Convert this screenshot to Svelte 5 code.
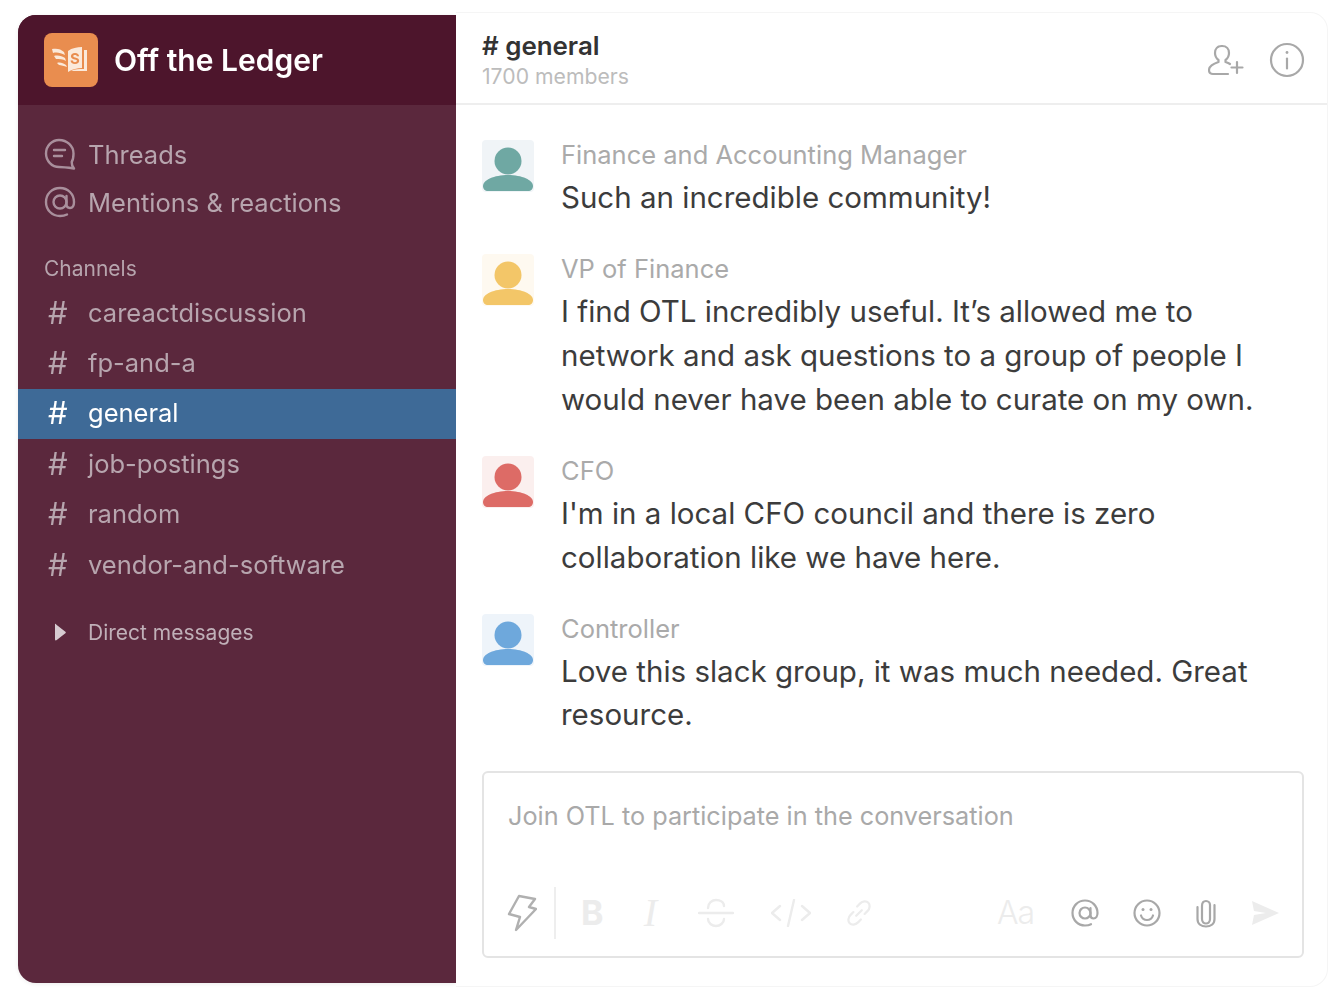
<script>
    const nav = [
        { id: 'threads', label: 'Threads' },
        { id: 'mentions', label: 'Mentions & reactions' }
    ];

    const channels = ['careactdiscussion', 'fp-and-a', 'general', 'job-postings', 'random', 'vendor-and-software'];

    const messages = [
        { role: 'Finance and Accounting Manager', color: '#6fa8a3', bg: '#f0f4f7', lines: ['Such an incredible community!'] },
        { role: 'VP of Finance', color: '#f3c668', bg: '#fef9f0', lines: ['I find OTL incredibly useful. It’s allowed me to', 'network and ask questions to a group of people I', 'would never have been able to curate on my own.'] },
        { role: 'CFO', color: '#dd6b66', bg: '#fbefee', lines: ["I'm in a local CFO council and there is zero", 'collaboration like we have here.'] },
        { role: 'Controller', color: '#6ea8dc', bg: '#eef4fa', lines: ['Love this slack group, it was much needed. Great', 'resource.'] }
    ];
</script>

<div class="window">
    <aside class="sidebar">
        <header class="team">
            <div class="logo">
                <svg viewBox="0 0 40 32" width="40" height="32" fill="#fbe9da">
                    <path d="M1 5c5-1 9 0 12 3l1 3C10 9 6 8 2 9zM3 12c4-1 8 0 11 2l1 3c-3-2-7-2-10-2zM6 19c3-1 6 0 9 2l1 2c-3-1-6-2-8-2z" />
                    <path d="M17 7c4-3 9-4 14-4v21c-5 0-9 1-14 4z" />
                    <path d="M33 6h3v21H20c4-2 8-2 13-2z" />
                    <text x="24" y="20" class="dollar">S</text>
                </svg>
            </div>
            <span class="team-name">Off the Ledger</span>
        </header>

        <nav class="nav">
            {#each nav as item (item.id)}
                <div class="nav-row">
                    {#if item.id === 'threads'}
                        <svg viewBox="0 0 32 32" width="32" height="32" fill="none" stroke="#a98f9c" stroke-width="2.4" stroke-linecap="round" stroke-linejoin="round">
                            <path d="M15 2C8 2 2 8 2 15.500S8 29 15 29c4 0 8 .5 15 1.500-1.500-2-2.500-4-2.300-6.500C29 22 29.500 19 29.500 15.500 29.500 8 23 2 15 2z" />
                            <path d="M10 12h11M10 18h8" />
                        </svg>
                    {:else}
                        <svg viewBox="0 0 32 32" width="32" height="32" fill="none" stroke="#a98f9c" stroke-width="2.4" stroke-linecap="round">
                            <circle cx="16" cy="16" r="6.500" />
                            <path d="M22.500 10v8c0 3 1.500 4 3.500 4 3 0 4-3 4-6C30 8 24 2 16 2S2 8 2 16s6 14 14 14c3 0 5-.5 7-1.500" />
                        </svg>
                    {/if}
                    <span>{item.label}</span>
                </div>
            {/each}
        </nav>

        <div class="section-label">Channels</div>

        <ul class="channels">
            {#each channels as channel (channel)}
                <li class="channel" class:active={channel === 'general'}>
                    <span class="hash">#</span>
                    <span>{channel}</span>
                </li>
            {/each}
        </ul>

        <div class="dm-row">
            <svg viewBox="0 0 12 18" width="12" height="18" fill="#d6cbd1">
                <path d="M1 1.500v15c0 .8.800 1.200 1.400.800l9-7c.5-.4.500-1.200 0-1.600l-9-7C1.800.300 1 .700 1 1.500z" />
            </svg>
            <span>Direct messages</span>
        </div>
    </aside>

    <main class="main">
        <header class="channel-head">
            <div>
                <div class="channel-title"># general</div>
                <div class="members">1700 members</div>
            </div>
            <div class="head-icons">
                <svg viewBox="0 0 36 32" width="36" height="32" fill="none" stroke="#a8a8a8" stroke-width="2.200" stroke-linecap="round" stroke-linejoin="round">
                    <path d="M14 2c-4.500 0-7 3-7 7 0 3 1.500 5.500 3.500 7v2C6 19.500 1 21.500 1 26c0 3 2 4 4 4h15" />
                    <path d="M14 2c4.500 0 7 3 7 7 0 3-1.500 5.500-3.500 7v2c1.500.5 3 1 4.500 2" />
                    <path d="M29 18v11M23.500 23.500h11" />
                </svg>
                <svg viewBox="0 0 36 36" width="36" height="36" fill="none" stroke="#a8a8a8" stroke-width="2.200" stroke-linecap="round">
                    <circle cx="18" cy="18" r="16" />
                    <path d="M18 16.500v10" />
                    <circle cx="18" cy="10.500" r="1.400" fill="#a8a8a8" stroke="none" />
                </svg>
            </div>
        </header>

        <section class="messages">
            {#each messages as message (message.role)}
                <article class="message">
                    <div class="avatar" style="background: {message.bg}">
                        <svg viewBox="0 0 52 52" width="52" height="52" fill={message.color}>
                            <circle cx="26" cy="21" r="13.500" />
                            <path d="M1 46c0-6 11-11 25-11s25 5 25 11c0 3-2 5-5 5H6c-3 0-5-2-5-5z" />
                        </svg>
                    </div>
                    <div class="message-body">
                        <div class="role">{message.role}</div>
                        {#each message.lines as line}
                            <div class="line">{line}</div>
                        {/each}
                    </div>
                </article>
            {/each}
        </section>

        <div class="composer">
            <div class="placeholder">Join OTL to participate in the conversation</div>
            <div class="toolbar">
                <svg class="bolt" viewBox="0 0 30 38" width="30" height="38" fill="none" stroke="#b0b0b0" stroke-width="2.400" stroke-linejoin="round">
                    <path d="M12 2l16 3-6 8 7 2L9 36l4-13-11-3z" />
                </svg>
                <span class="divider"></span>
                <div class="format">
                    <span class="fmt-b">B</span>
                    <span class="fmt-i">I</span>
                    <svg viewBox="0 0 36 30" width="36" height="30" fill="none" stroke="#ececec" stroke-width="2.400" stroke-linecap="round">
                        <path d="M1 15h34M10 10c0-5 4-8 8-8s8 2 8 6M10 21c0 4 4 7 8 7s8-3 8-7" />
                    </svg>
                    <svg viewBox="0 0 40 28" width="40" height="28" fill="none" stroke="#ececec" stroke-width="2.400" stroke-linecap="round" stroke-linejoin="round">
                        <path d="M9 7l-8 7 8 7M31 7l8 7-8 7M23 1l-6 26" />
                    </svg>
                    <svg class="link" viewBox="0 0 30 30" width="28" height="28" fill="none" stroke="#ececec" stroke-width="2.400" stroke-linecap="round">
                        <path d="M12 18l6-6M13 8l3-3c3-3 7-3 9-1s2 6-1 9l-3 3M17 22l-3 3c-3 3-7 3-9 1s-2-6 1-9l3-3" />
                    </svg>
                </div>
                <div class="actions">
                    <span class="fmt-aa">Aa</span>
                    <svg viewBox="0 0 28 28" width="28" height="28" fill="none" stroke="#a8a8a8" stroke-width="2.200" stroke-linecap="round">
                        <circle cx="14" cy="14" r="5.500" />
                        <path d="M19.500 9v7c0 2.500 1.500 3.500 3.200 3.500 2.300 0 3.800-2.500 3.800-5.500C26.500 7 21 1.500 14 1.500S1.500 7 1.500 14 7 26.500 14 26.500c2.500 0 4.500-.5 6-1.300" />
                    </svg>
                    <svg viewBox="0 0 28 28" width="28" height="28" fill="none" stroke="#a8a8a8" stroke-width="2.200" stroke-linecap="round">
                        <circle cx="14" cy="14" r="12.500" />
                        <path d="M8 16.500c1 3 3.500 4.500 6 4.500s5-1.500 6-4.500" />
                        <circle cx="10" cy="10.500" r="1.500" fill="#a8a8a8" stroke="none" />
                        <circle cx="18" cy="10.500" r="1.500" fill="#a8a8a8" stroke="none" />
                    </svg>
                    <svg viewBox="0 0 22 30" width="22" height="30" fill="none" stroke="#a8a8a8" stroke-width="2.200" stroke-linecap="round">
                        <path d="M7 8v13c0 3 2 4.500 4 4.500s4-1.500 4-4.500V7c0-2-1.500-4-4-4S7 5 7 8" />
                        <path d="M2.500 9v12c0 5 4 7.500 8.500 7.500s8.500-2.500 8.500-7.500V7" />
                    </svg>
                    <svg viewBox="0 0 28 26" width="28" height="26" fill="#ececec">
                        <path d="M1 1l27 12L1 25l2-10 12-2-12-2z" />
                    </svg>
                </div>
            </div>
        </div>
    </main>
</div>

<style>
    :global(body) {
        margin: 0;
        background: #fff;
    }

    .window {
        width: 1328px;
        height: 995px;
        box-sizing: border-box;
        padding: 15px 0 12px 18px;
        display: flex;
        overflow: hidden;
        font-family: Inter, "Noto Sans", sans-serif;
        filter: blur(0.7px);
    }

    .sidebar {
        width: 438px;
        flex: none;
        background: #5b283d;
        border-radius: 18px 0 0 18px;
        overflow: hidden;
        box-shadow: 0 1px 4px rgba(0, 0, 0, 0.08);
    }

    .team {
        height: 90px;
        background: #4d152c;
        display: flex;
        align-items: center;
        padding-left: 26px;
        gap: 16px;
    }

    .logo {
        width: 54px;
        height: 54px;
        background: #e98d4f;
        border-radius: 8px;
        display: flex;
        align-items: center;
        justify-content: center;
    }

    .dollar {
        font-size: 15px;
        font-weight: 700;
        fill: #e98d4f;
        text-anchor: middle;
    }

    .team-name {
        color: #fff;
        font-size: 30px;
        font-weight: 600;
        margin-top: -1px;
    }

    .nav {
        padding: 25px 0 0 26px;
    }

    .nav-row {
        height: 48px;
        display: flex;
        align-items: center;
        gap: 12px;
        color: #b7a5ae;
        font-size: 25.5px;
    }

    .section-label {
        margin-top: 27px;
        padding-left: 26px;
        height: 32px;
        line-height: 32px;
        color: #b7a5ae;
        font-size: 21px;
    }

    .channels {
        list-style: none;
        margin: 3px 0 0;
        padding: 0;
    }

    .channel {
        height: 50.4px;
        box-sizing: border-box;
        padding: 0 0 2px 30px;
        display: flex;
        align-items: center;
        color: #b7a5ae;
        font-size: 25.5px;
    }

    .hash {
        width: 40px;
        font-size: 31px;
    }

    .channel.active {
        background: #3e6a97;
        color: #fff;
    }

    .dm-row {
        margin-top: 25px;
        height: 34px;
        display: flex;
        align-items: center;
        gap: 22px;
        padding-left: 36px;
        color: #c0b0b8;
        font-size: 21px;
    }

    .main {
        flex: 1;
        min-width: 0;
        border: 1px solid #f5f5f5;
        border-left: none;
        border-radius: 0 18px 18px 0;
        margin: -3px 0 -4px;
        background: #fff;
        box-sizing: border-box;
        padding: 3px 0 0;
    }

    .channel-head {
        height: 89px;
        box-sizing: border-box;
        border-bottom: 2px solid #eeeeee;
        display: flex;
        justify-content: space-between;
        align-items: center;
        padding: 0 22px 0 26px;
    }

    .channel-title {
        color: #333;
        font-size: 25.9px;
        font-weight: 600;
        line-height: 32px;
    }

    .members {
        color: #bcbcbc;
        font-size: 21.2px;
        line-height: 28px;
    }

    .head-icons {
        display: flex;
        align-items: center;
        gap: 25px;
    }

    .messages {
        padding: 35px 24px 0 26px;
        margin-bottom: -1px;
    }

    .message {
        display: flex;
        gap: 27px;
        margin-bottom: 34.3px;
    }

    .avatar {
        width: 52px;
        height: 52px;
        flex: none;
        border-radius: 4px;
    }

    .role {
        color: #aaaaaa;
        font-size: 25.5px;
        line-height: 30px;
        margin-bottom: 6px;
    }

    .line {
        color: #3c3c3c;
        font-size: 29.5px;
        line-height: 43.800px;
        white-space: nowrap;
    }

    .composer {
        margin: 0 23px 0 26px;
        height: 187px;
        box-sizing: border-box;
        border: 2px solid #e4e4e4;
        border-radius: 6px;
        padding: 27px 23px 0 24px;
    }

    .placeholder {
        color: #a9a9a9;
        font-size: 25.25px;
        line-height: 32px;
    }

    .toolbar {
        display: flex;
        align-items: center;
        margin-top: 53px;
        height: 56px;
    }

    .bolt {
        margin-left: -1px;
    }

    .divider {
        width: 2px;
        height: 52px;
        background: #eeeeee;
        margin: 0 25px 0 17px;
    }

    .format {
        display: flex;
        align-items: center;
        gap: 37px;
    }

    .link {
        margin-left: -3px;
    }

    .fmt-b {
        color: #ececec;
        font-size: 34px;
        font-weight: 700;
    }

    .fmt-i {
        width: 20px;
        text-align: center;
        color: #ececec;
        font-size: 40px;
        font-style: italic;
        font-family: "Liberation Serif", serif;
    }

    .actions {
        margin-left: auto;
        display: flex;
        align-items: center;
        gap: 34px;
    }

    .fmt-aa {
        color: #ececec;
        font-size: 32px;
        font-weight: 300;
        letter-spacing: -1px;
        margin-right: 3px;
    }
</style>
